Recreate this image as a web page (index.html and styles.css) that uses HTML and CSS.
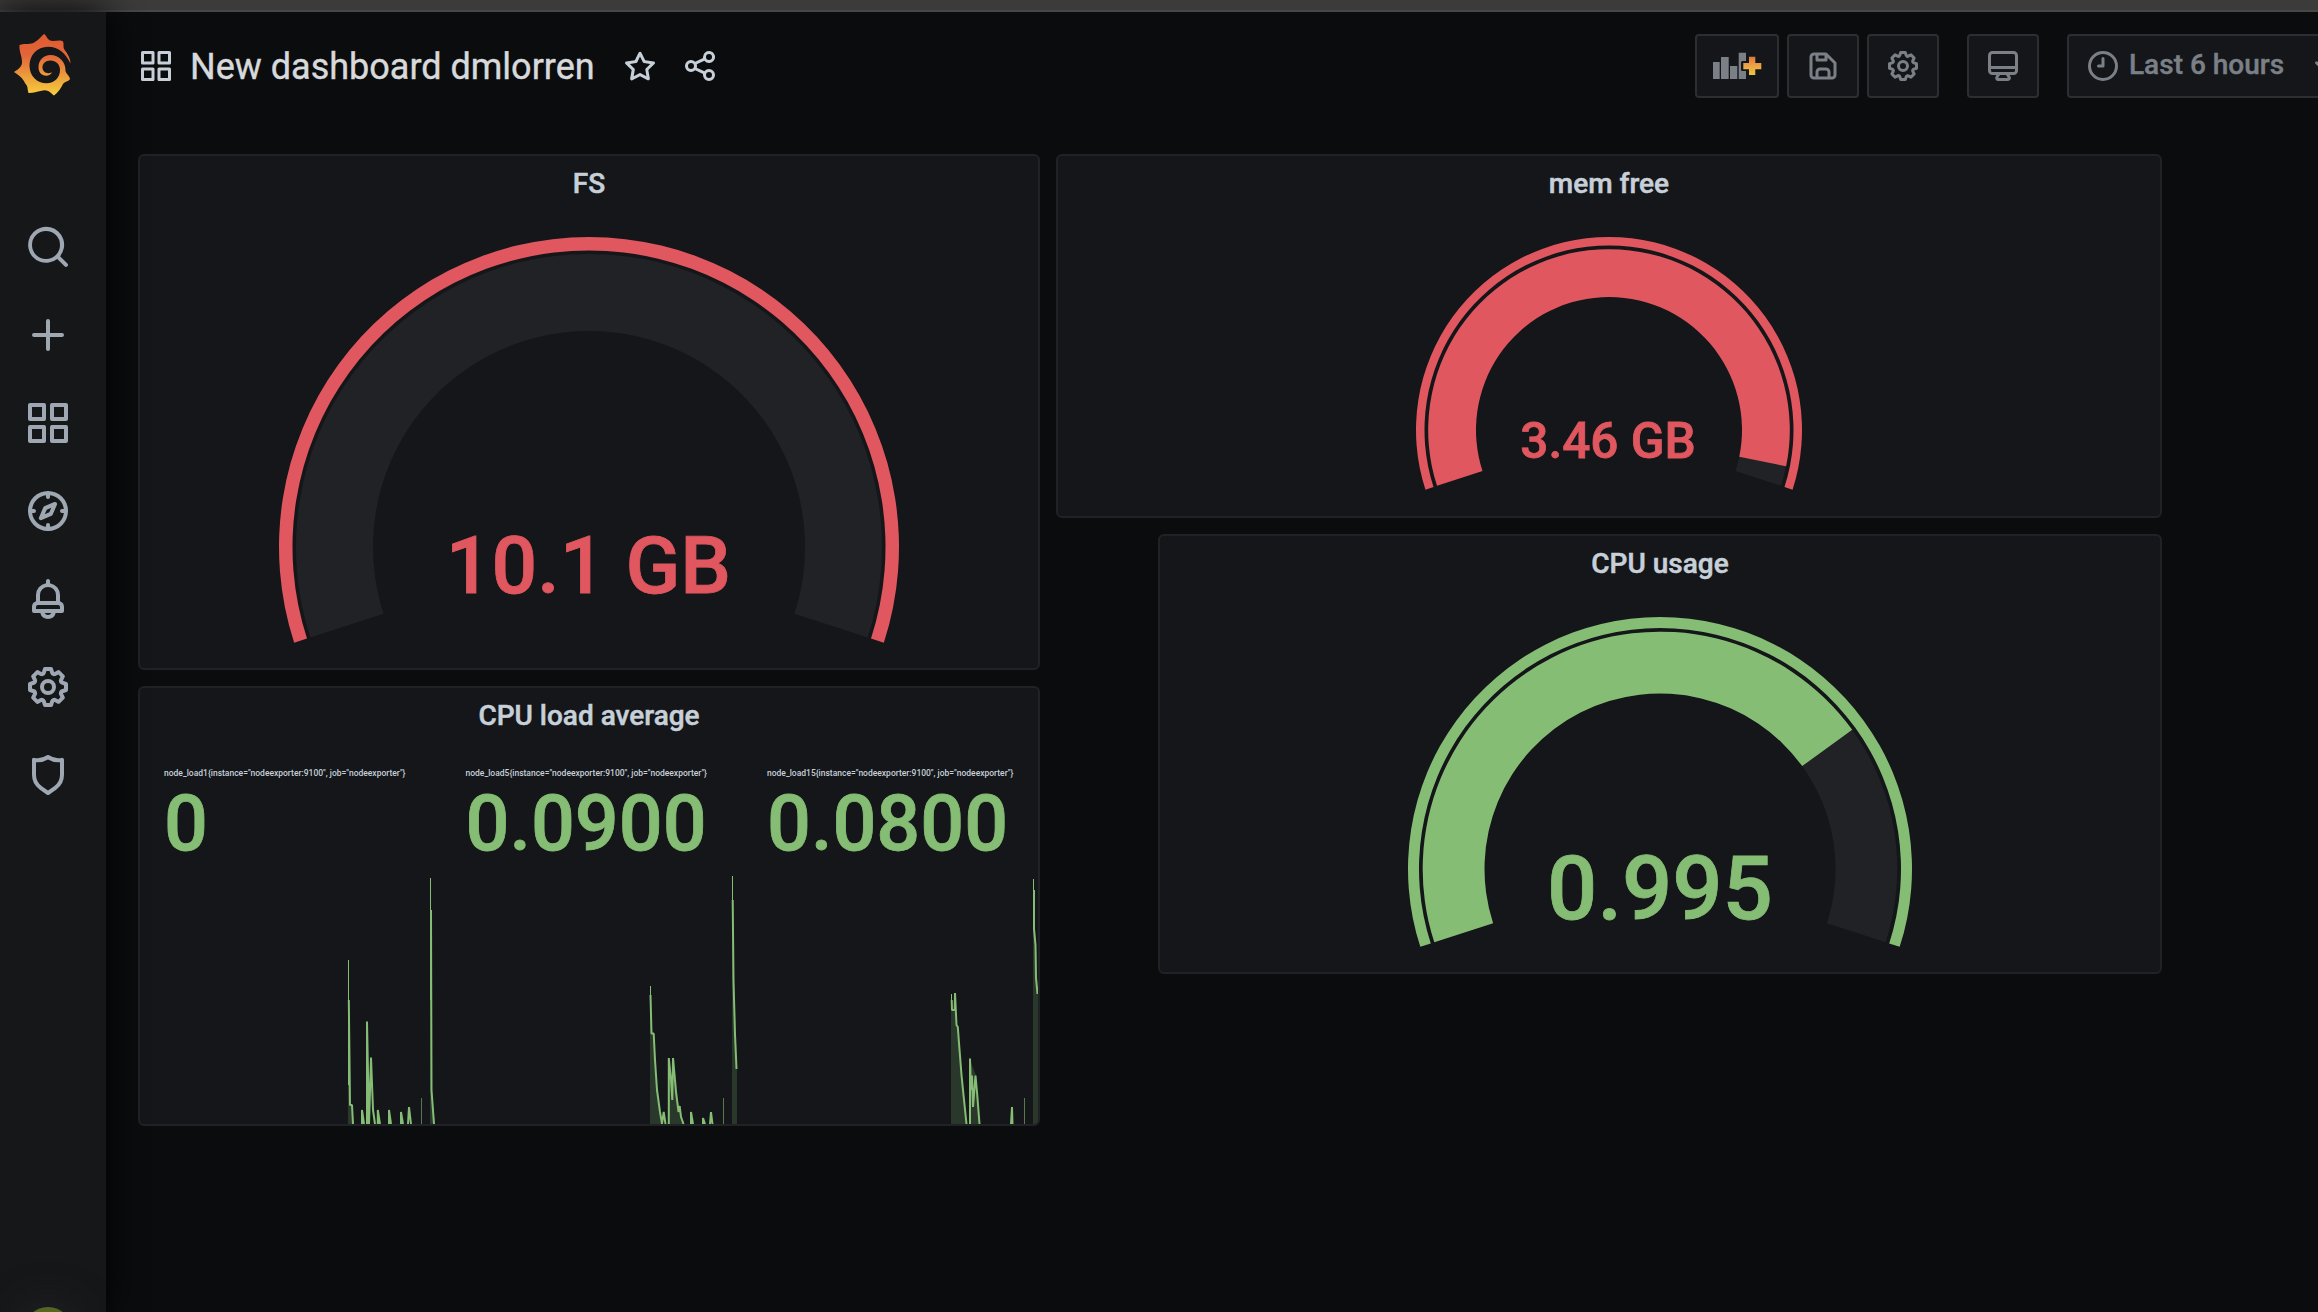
FILE: index.html
```html
<!DOCTYPE html>
<html lang="en">
<head>
<meta charset="utf-8">
<title>New dashboard dmlorren</title>
<link rel="stylesheet" href="styles.css">
</head>
<body>
<svg class="defs" width="0" height="0" aria-hidden="true">
  <defs>
    <linearGradient id="logo" x1="0" y1="0" x2="0" y2="1"><stop offset="0" stop-color="#e05a2f"/><stop offset=".35" stop-color="#e2663a"/><stop offset="1" stop-color="#f6cf3c"/></linearGradient>
    <linearGradient id="plus" x1="0" y1="0" x2="0" y2="1"><stop offset="0" stop-color="#e0763c"/><stop offset=".5" stop-color="#eda447"/><stop offset="1" stop-color="#ecc53c"/></linearGradient>
    <symbol id="apps" viewBox="0 0 24 24"><path d="M10 13H3a1 1 0 0 0-1 1v7a1 1 0 0 0 1 1h7a1 1 0 0 0 1-1v-7a1 1 0 0 0-1-1Zm-1 7H4v-5h5ZM21 2h-7a1 1 0 0 0-1 1v7a1 1 0 0 0 1 1h7a1 1 0 0 0 1-1V3a1 1 0 0 0-1-1Zm-1 7h-5V4h5Zm1 4h-7a1 1 0 0 0-1 1v7a1 1 0 0 0 1 1h7a1 1 0 0 0 1-1v-7a1 1 0 0 0-1-1Zm-1 7h-5v-5h5ZM10 2H3a1 1 0 0 0-1 1v7a1 1 0 0 0 1 1h7a1 1 0 0 0 1-1V3a1 1 0 0 0-1-1ZM9 9H4V4h5Z"/></symbol>
    <symbol id="gear" viewBox="0 0 24 24"><path d="m21.32 9.55-1.89-.63.89-1.78A1 1 0 0 0 20.13 6L18 3.87a1 1 0 0 0-1.15-.19l-1.78.89-.63-1.89A1 1 0 0 0 13.5 2h-3a1 1 0 0 0-.95.68l-.63 1.89-1.78-.89A1 1 0 0 0 6 3.87L3.87 6a1 1 0 0 0-.19 1.15l.89 1.78-1.89.63a1 1 0 0 0-.68.94v3a1 1 0 0 0 .68.95l1.89.63-.89 1.78A1 1 0 0 0 3.87 18L6 20.13a1 1 0 0 0 1.15.19l1.78-.89.63 1.89a1 1 0 0 0 .95.68h3a1 1 0 0 0 .95-.68l.63-1.89 1.78.89a1 1 0 0 0 1.13-.19L20.13 18a1 1 0 0 0 .19-1.15l-.89-1.78 1.89-.63a1 1 0 0 0 .68-.94v-3a1 1 0 0 0-.68-.95ZM20 12.78l-1.2.4A2 2 0 0 0 17.64 16l.57 1.14-1.1 1.1-1.11-.6a2 2 0 0 0-2.79 1.16l-.4 1.2h-1.59l-.4-1.2A2 2 0 0 0 8 17.64l-1.14.57-1.1-1.1.6-1.11a2 2 0 0 0-1.16-2.82l-1.2-.4v-1.56l1.2-.4A2 2 0 0 0 6.36 8l-.57-1.11 1.1-1.1L8 6.36a2 2 0 0 0 2.82-1.16l.4-1.2h1.56l.4 1.2A2 2 0 0 0 16 6.36l1.14-.57 1.1 1.1-.6 1.11a2 2 0 0 0 1.16 2.79l1.2.4ZM12 8a4 4 0 1 0 4 4 4 4 0 0 0-4-4Zm0 6a2 2 0 1 1 2-2 2 2 0 0 1-2 2Z"/></symbol>
  </defs>
</svg>
<div class="window-edge"></div>
<div class="app">
  <nav class="sidebar">
    <a class="brand" href="#"><svg width="58" height="62" viewBox="0 0 58 62"><path fill="url(#logo)" d="M30.300 0C32 1 33 5 36 6.500C40 8 46 5 49 7.500C50 9 49 13 50 15C54 20 56.500 25 56.500 29.500C52 20 45 12.700 34 12.700C23 12.700 15.500 21 15.500 31.500C15.500 42 23 49.300 32.500 49.300C40.500 49.300 46 43.500 46 36C46 30 41.500 26.500 36.500 26.500C31.500 26.500 28 30 28.500 34C29 38.500 33.500 40.500 38 38.300C36 43.500 24.500 43.500 24.500 33C24.500 26 29.500 21 36.500 21C45 21 52 28 51.500 37C52 40 56 42 56 45C55 47.500 50.500 47.500 49 50C47.500 53.500 44 58.500 40 61.500C38 60.500 36 57 32 56.500C28 55.500 22 59.500 14.500 59C13.500 57 14 53 12.500 51C10 48.500 10 44 0 38C5 35 8.500 32 8 27.500C8 22 5 18 5.500 11C11 9 17 11 21 8C25 6 28 1 30.300 0Z"/></svg></a>
    <a class="item" href="#"><svg class="icon" viewBox="0 0 24 24"><path d="m21.710 20.290-3.680-3.670A9 9 0 1 0 16.620 18l3.670 3.680a1 1 0 0 0 1.420 0 1 1 0 0 0 0-1.390ZM11 18a7 7 0 1 1 7-7 7 7 0 0 1-7 7Z"/></svg></a>
    <a class="item" href="#"><svg class="icon" viewBox="0 0 24 24"><path d="M19 11h-6V5a1 1 0 0 0-2 0v6H5a1 1 0 0 0 0 2h6v6a1 1 0 0 0 2 0v-6h6a1 1 0 0 0 0-2Z"/></svg></a>
    <a class="item" href="#"><svg class="icon"><use href="#apps"/></svg></a>
    <a class="item" href="#"><svg class="icon" viewBox="0 0 24 24"><path d="M12 2a10 10 0 1 0 10 10A10 10 0 0 0 12 2Zm1 17.930V19a1 1 0 0 0-2 0v.93A8 8 0 0 1 4.070 13H5a1 1 0 0 0 0-2h-.93A8 8 0 0 1 11 4.070V5a1 1 0 0 0 2 0v-.93A8 8 0 0 1 19.930 11H19a1 1 0 0 0 0 2h.93A8 8 0 0 1 13 19.930ZM15.140 7.550l-5 2.120a1 1 0 0 0-.52.520l-2.120 5a1 1 0 0 0 .21 1.100 1 1 0 0 0 .7.290.93.93 0 0 0 .4-.080l5-2.120a1 1 0 0 0 .520-.520l2.120-5a1 1 0 0 0-1.310-1.310Zm-2.490 5.100-2.280 1 1-2.280 2.280-1Z"/></svg></a>
    <a class="item" href="#"><svg class="icon" viewBox="0 0 24 24"><path d="M18 13.180V10a6 6 0 0 0-5-5.910V3a1 1 0 0 0-2 0v1.090A6 6 0 0 0 6 10v3.180A3 3 0 0 0 4 16v2a1 1 0 0 0 1 1h3.140a4 4 0 0 0 7.720 0H19a1 1 0 0 0 1-1v-2a3 3 0 0 0-2-2.820ZM8 10a4 4 0 0 1 8 0v3H8Zm4 10a2 2 0 0 1-1.720-1h3.440A2 2 0 0 1 12 20Zm6-3H6v-1a1 1 0 0 1 1-1h10a1 1 0 0 1 1 1Z"/></svg></a>
    <a class="item" href="#"><svg class="icon"><use href="#gear"/></svg></a>
    <a class="item" href="#"><svg class="icon" viewBox="0 0 24 24"><path d="M19.630 3.650a1 1 0 0 0-.84-.2 8 8 0 0 1-6.220-1.270 1 1 0 0 0-1.140 0 8 8 0 0 1-6.220 1.270 1 1 0 0 0-1.210 1v7.450a9 9 0 0 0 3.770 7.330l3.650 2.600a1 1 0 0 0 1.160 0l3.650-2.600A9 9 0 0 0 20 11.880V4.430a1 1 0 0 0-.37-.78ZM18 11.880a7 7 0 0 1-2.930 5.700L12 19.770l-3.070-2.190A7 7 0 0 1 6 11.880V5.580a10 10 0 0 0 6-1.390 10 10 0 0 0 6 1.390Z"/></svg></a>
    <span class="avatar"></span>
  </nav>
  <main class="main">
    <header class="toolbar">
      <svg class="tool-icon apps-icon"><use href="#apps"/></svg>
      <h1>New dashboard dmlorren</h1>
      <svg class="tool-icon star" viewBox="0 0 24 24"><path d="M22 9.670a1 1 0 0 0-.86-.67l-5.690-.83L12.900 3a1 1 0 0 0-1.800 0L8.550 8.160 2.860 9a1 1 0 0 0-.81.680 1 1 0 0 0 .25 1l4.130 4-1 5.680a1 1 0 0 0 1.470 1.080l5.100-2.670 5.100 2.670a.93.93 0 0 0 .46.120 1 1 0 0 0 .59-.190 1 1 0 0 0 .4-1l-1-5.680 4.130-4A1 1 0 0 0 22 9.670Zm-6.150 4a1 1 0 0 0-.29.880l.72 4.200-3.760-2a1.060 1.060 0 0 0-.94 0l-3.760 2 .72-4.200a1 1 0 0 0-.29-.88l-3-3 4.210-.61a1 1 0 0 0 .76-.550L12 5.700l1.880 3.820a1 1 0 0 0 .76.550l4.210.61Z"/></svg>
      <svg class="tool-icon" viewBox="0 0 24 24"><path d="M18 14a4 4 0 0 0-3.080 1.480l-5.100-2.350a3.640 3.640 0 0 0 0-2.260l5.100-2.350A4 4 0 1 0 14 6a4.170 4.170 0 0 0 .07.710L8.790 9.140a4 4 0 1 0 0 5.720l5.280 2.430A4.170 4.170 0 0 0 14 18a4 4 0 1 0 4-4Zm0-10a2 2 0 1 1-2 2 2 2 0 0 1 2-2ZM6 14a2 2 0 1 1 2-2 2 2 0 0 1-2 2Zm12 6a2 2 0 1 1 2-2 2 2 0 0 1-2 2Z"/></svg>
      <div class="actions">
        <button class="btn add"><svg width="50" height="36" viewBox="0 0 50 36"><path fill="#7b8087" d="M1 14h6.700v17H1zM9 9h7.700v22H9zM18 18h7.300v13H18zM26.700 4.700H34V13h-3.500a1.500 1.500 0 0 0-1.500 1.500v7A1.500 1.500 0 0 0 30.500 23H34v8h-7.300z"/><path fill="url(#plus)" d="M37 8.700h6.300V15h6v6.300h-6V27H37v-5.700h-5.700V15H37z"/></svg></button>
        <button class="btn"><svg class="tool-icon" viewBox="0 0 24 24"><path d="m20.710 9.290-6-6A1 1 0 0 0 14 3H6a3 3 0 0 0-3 3v12a3 3 0 0 0 3 3h12a3 3 0 0 0 3-3v-8a1 1 0 0 0-.290-.710ZM9 5h4v2H9Zm6 14H9v-3a1 1 0 0 1 1-1h4a1 1 0 0 1 1 1Zm4-1a1 1 0 0 1-1 1h-1v-3a3 3 0 0 0-3-3h-4a3 3 0 0 0-3 3v3H6a1 1 0 0 1-1-1V6a1 1 0 0 1 1-1h1v3a1 1 0 0 0 1 1h6a1 1 0 0 0 1-1V6.410l4 4Z"/></svg></button>
        <button class="btn"><svg class="tool-icon"><use href="#gear"/></svg></button>
        <button class="btn monitor"><svg class="tool-icon" viewBox="0 0 24 24"><path d="M19 2H5a3 3 0 0 0-3 3v10a3 3 0 0 0 3 3h2.640l-.58 1a2 2 0 0 0 0 2 2 2 0 0 0 1.750 1h6.460A2 2 0 0 0 17 21a2 2 0 0 0 0-2l-.590-1H19a3 3 0 0 0 3-3V5a3 3 0 0 0-3-3ZM8.770 20 10 18h4l1.200 2ZM20 15a1 1 0 0 1-1 1H5a1 1 0 0 1-1-1v-1h16Zm0-3H4V5a1 1 0 0 1 1-1h14a1 1 0 0 1 1 1Z"/></svg></button>
        <button class="btn time"><svg class="tool-icon" viewBox="0 0 24 24"><path d="M12 2a10 10 0 1 0 10 10A10 10 0 0 0 12 2Zm0 18a8 8 0 1 1 8-8 8 8 0 0 1-8 8Zm0-14a1 1 0 0 0-1 1v4H9a1 1 0 0 0 0 2h3a1 1 0 0 0 1-1V7a1 1 0 0 0-1-1Z"/></svg><span>Last 6 hours</span><svg class="tool-icon chevron" viewBox="0 0 24 24"><path d="M17 9.170a1 1 0 0 0-1.410 0L12 12.710 8.460 9.170a1 1 0 0 0-1.410 1.420l4.240 4.240a1 1 0 0 0 1.420 0L17 10.590a1 1 0 0 0 0-1.420Z"/></svg></button>
      </div>
    </header>
    <section class="grid">
      <article class="panel fs">
        <h2>FS</h2>
        <svg class="viz" viewBox="140 210 898 458" width="898" height="458" id="g-fs"></svg>
      </article>
      <article class="panel mem">
        <h2>mem free</h2>
        <svg class="viz" viewBox="1058 210 1102 306" width="1102" height="306" id="g-mem"></svg>
      </article>
      <article class="panel load">
        <h2>CPU load average</h2>
        <div class="stats">
          <div class="stat"><small>node_load1{instance="nodeexporter:9100", job="nodeexporter"}</small><strong>0</strong></div>
          <div class="stat"><small>node_load5{instance="nodeexporter:9100", job="nodeexporter"}</small><strong>0.0900</strong></div>
          <div class="stat"><small>node_load15{instance="nodeexporter:9100", job="nodeexporter"}</small><strong>0.0800</strong></div>
        </div>
        <svg class="spark" viewBox="140 864 898 260" width="898" height="260">
          <path class="area" d="M348 960L350 1105H352L354 1124H348ZM430 878L432 1090L435 1124H430ZM650 986L651.500 1033L654 1034L657 1090L661 1124H650ZM668 1057L672 1078L674 1057L678 1100L684 1124H668ZM732 876L733.500 980L737 1069V1124H732ZM951 994L952 1010H954.500L959 1043L966.500 1124H951ZM969 1058L976 1075L980 1124H969ZM1033 879L1038 994V1124H1033Z"/>
          <path class="thin" d="M348.500 960V1085M430.500 878V1000M650.500 986V1000M732.500 876V905M951.500 994V1010M1033.500 879V929"/>
          <path class="faint" d="M421.500 1098V1124M723.500 1098V1124M1024.500 1098V1124"/>
          <path class="line" d="M348.800 1000L350 1105H352L353 1124M362 1124V1110L364 1124M367 1124V1021.500L369 1124L371 1057.500L373 1110L375 1124M377.800 1124V1110L380 1124M389 1124V1110L391 1124M401 1124V1112L403 1124M408 1124L409 1107L411 1124M431 910L431.500 1090L434 1124"/>
          <path class="line" d="M650.500 995L651.500 1033.500H653.700L655 1060L657 1090L660 1112L662 1124L663.700 1112L665.500 1124M668.800 1124V1058L671 1080L672.300 1100L673 1058L674.500 1075L676 1092L678.500 1112L679.700 1106L681 1117L683.500 1124M691 1124V1112L693 1124M703 1124V1118L705 1124M710 1124L711 1112L712.500 1124M732.700 900L733.500 980L735 1034L736.500 1069"/>
          <path class="line" d="M951.700 1000L952 1010H954.700L955 993L956.500 1025L957.800 1027L959 1043L961.500 1075L963 1090L966.500 1124M970 1124V1058.500L971 1090L972 1075.500L973 1107L975.500 1075.500L977 1092L979.500 1124M1011 1124L1012 1107L1012.500 1124M1034 890V929L1035.500 945L1036 978L1037.500 994"/>
        </svg>
      </article>
      <article class="panel cpu">
        <h2>CPU usage</h2>
        <svg class="viz" viewBox="1160 590 1000 382" width="1000" height="382" id="g-cpu"></svg>
      </article>
    </section>
  </main>
</div>
<script src="gauges.js"></script>
</body>
</html>
```
FILE: styles.css
```css
* { box-sizing: border-box; }
body {
  margin: 0;
  height: 1312px;
  overflow: hidden;
  display: flex;
  flex-direction: column;
  background: #0b0c0e;
  color: #c7d0d9;
  font-family: Roboto, "Liberation Sans", sans-serif;
}
.defs { position: absolute; }
.window-edge {
  flex: none;
  height: 12px;
  background: #3b3b3b;
  border-bottom: 2px solid #474747;
}
.app { flex: 1; display: flex; min-height: 0; }
.sidebar {
  flex: none;
  width: 106px;
  display: flex;
  flex-direction: column;
  background: #161719;
  box-shadow: 0 0 38px #000;
  z-index: 1;
}
.brand { flex: none; height: 62px; margin: 22px 0 107px 14px; }
.brand svg { display: block; }
.item {
  flex: none;
  height: 88px;
  padding-left: 24px;
  display: flex;
  align-items: center;
}
.icon { width: 48px; height: 48px; fill: #9fa7b3; }
.avatar {
  flex: none;
  width: 48px;
  height: 48px;
  margin: 488px 0 0 24px;
  border-radius: 50%;
  background: #56671f;
  box-shadow: 0 0 40px #25262b;
}
.main { flex: none; width: 2212px; overflow: hidden; }
.toolbar {
  height: 142px;
  padding: 22px 0 0 32px;
  display: flex;
  align-items: flex-start;
}
.tool-icon { flex: none; width: 36px; height: 36px; fill: #c7d0d9; }
.toolbar > .tool-icon { margin-top: 14px; }
.toolbar h1 {
  margin: 11px 28px 0 16px;
  width: 404px;
  font-size: 36px;
  line-height: 44px;
  font-weight: 400;
  color: #d8d9da;
  white-space: nowrap;
  -webkit-text-stroke: .4px currentColor;
}
.toolbar .star { margin-right: 24px; }
.actions { display: flex; gap: 8px; margin-left: 977px; }
.btn {
  flex: none;
  width: 72px;
  height: 64px;
  padding: 0;
  display: flex;
  align-items: center;
  justify-content: center;
  background: #141619;
  border: 2px solid #2c2e31;
  border-radius: 4px;
  color: #7b8087;
  font: 500 28px/36px Roboto, "Liberation Sans", sans-serif;
}
.btn .tool-icon { fill: #7b8087; }
.btn.add { width: 84px; }
.btn.monitor { margin: 0 20px; }
.btn.time { width: 300px; justify-content: flex-start; padding-left: 16px; white-space: nowrap; }
.time span { margin: -2px 20px 0 8px; width: 156px; text-align: left; -webkit-text-stroke: .4px currentColor; }
.grid {
  display: grid;
  grid-template-columns: repeat(20, 86px);
  grid-auto-rows: 60px;
  gap: 16px;
  padding-left: 32px;
}
.panel {
  display: flex;
  flex-direction: column;
  background: #141619;
  border: 2px solid #202226;
  border-radius: 6px;
  overflow: hidden;
}
.fs { grid-area: 1 / 1 / span 7 / span 9; }
.mem { grid-area: 1 / 10 / span 5 / span 11; }
.load { grid-area: 8 / 1 / span 6 / span 9; }
.cpu { grid-area: 6 / 11 / span 6 / span 10; }
.panel h2 {
  flex: none;
  margin: 0;
  height: 54px;
  line-height: 56px;
  text-align: center;
  font-size: 28px;
  font-weight: 500;
  -webkit-text-stroke: .5px currentColor;
}
.viz { display: block; flex: none; }
.track { fill: #202226; }
.red { fill: #e0575f; }
.green { fill: #85bd74; }
.value { font-weight: 500; text-anchor: middle; stroke-width: .8; }
.value.red { stroke: #e0575f; }
.value.green { stroke: #85bd74; }
.stats { display: flex; gap: 1px; padding: 22px 0 0 24px; height: 122px; }
.stat { width: 300.500px; flex: none; display: flex; flex-direction: column; white-space: nowrap; }
.stat small { font-size: 8.500px; line-height: 18px; font-weight: 500; }
.stat strong { font-size: 77.300px; line-height: 83px; font-weight: 500; color: #85bd74; -webkit-text-stroke: .8px currentColor; }
.spark { display: block; flex: none; }
.area { fill: #2a382c; }
.line, .thin, .faint { fill: none; stroke: #85bd74; stroke-width: 2; stroke-linejoin: bevel; }
.thin { stroke-width: 1; }
.faint { stroke-width: 1; opacity: .6; }
```
FILE: gauges.js
```js
// Draws a gauge: threshold ring, track, value arc and label. Angles are in degrees, clockwise from the right.
const START = 162, END = 378;
function band(cx, cy, outer, inner, from, to) {
  const at = (r, a) => {
    const t = a * Math.PI / 180;
    return (cx + r * Math.cos(t)).toFixed(2) + ' ' + (cy + r * Math.sin(t)).toFixed(2);
  };
  const large = to - from > 180 ? 1 : 0;
  return `M${at(outer, from)}A${outer} ${outer} 0 ${large} 1 ${at(outer, to)}L${at(inner, to)}A${inner} ${inner} 0 ${large} 0 ${at(inner, from)}Z`;
}
function gauge(id, g) {
  const path = (cls, o, i, to) => `<path class="${cls}" d="${band(g.cx, g.cy, o, i, START, to)}"/>`;
  document.getElementById(id).innerHTML =
    path(g.color, g.r[0], g.r[1], END) +
    path('track', g.r[2], g.r[3], END) +
    (g.end > START ? path(g.color, g.r[2], g.r[3], g.end) : '') +
    `<text class="value ${g.color}" x="${g.tx}" y="${g.ty}" font-size="${g.size}">${g.text}</text>`;
}
gauge('g-fs', { cx: 589, cy: 547, r: [310, 296.5, 293, 216], end: 0, color: 'red', text: '10.1 GB', tx: 588.5, ty: 593, size: 80.5 });
gauge('g-mem', { cx: 1609, cy: 430, r: [193, 184.5, 180.8, 133], end: 371.6, color: 'red', text: '3.46 GB', tx: 1608, ty: 458, size: 49.5 });
gauge('g-cpu', { cx: 1660, cy: 869, r: [252, 241, 237.3, 175.5], end: 324.1, color: 'green', text: '0.995', tx: 1660, ty: 918.7, size: 88.5 });
```
